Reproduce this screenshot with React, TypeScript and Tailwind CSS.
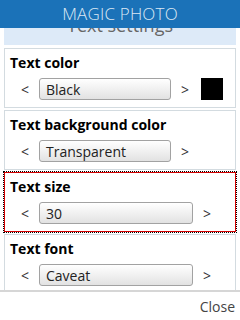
import React from 'react';

interface SettingRowProps {
  label: string;
  value: string;
  swatch?: string | null;
  focused?: boolean;
}

const SettingCard: React.FC<SettingRowProps> = ({ label, value, swatch, focused }) => {
  const hasSwatch = swatch !== undefined;
  return (
    <div
      className={
        'h-[60px] shrink-0 bg-white ' +
        (focused
          ? 'border border-[#d40000] outline-1 outline-dotted outline-black'
          : 'border border-[#d3dbe0]')
      }
    >
      <div className="pl-[5px] pt-[4px] text-[14px] leading-[20px] font-bold text-black">{label}</div>
      <div className={'mt-[5px] flex h-[22px] items-center pl-[6px] ' + (hasSwatch ? 'pr-[12px]' : 'pr-[14px]')}>
        <span className="w-[28px] text-center text-[14px] text-[#333]">&lt;</span>
        <div className="flex h-[22px] flex-1 items-center rounded-[3px] border border-[#a2a2a2] bg-linear-to-b from-white to-[#e2e2e2] pl-[6px] text-[14px] text-[#222]">
          {value}
        </div>
        <span className="w-[28px] text-center text-[14px] text-[#333]">&gt;</span>
        {hasSwatch && (
          <div className={'ml-[2px] h-[22px] w-[22px] ' + (swatch ? '' : 'bg-transparent')} style={swatch ? { backgroundColor: swatch } : undefined} />
        )}
      </div>
    </div>
  );
};

export default function App() {
  return (
    <div className="relative flex h-[320px] w-[240px] flex-col overflow-hidden bg-white" style={{ fontFamily: '"Open Sans", "DejaVu Sans", sans-serif' }}>
      {/* fixed header over the scrolled content */}
      <div className="absolute inset-x-0 top-0 z-10 flex h-[28px] items-center justify-center bg-[#1b72b8] text-[17px] font-light tracking-[0.2px] text-[#dbe8f4]">
        MAGIC PHOTO
      </div>

      <div className="flex flex-1 flex-col gap-[2px] overflow-hidden px-[4px] pt-[8px]">
        <div className="mb-[1px] h-[37px] shrink-0 bg-[#ddeaf8] pt-[5px] text-center text-[18px] leading-[24px] text-[#666]">
          Text settings
        </div>
        <SettingCard label="Text color" value="Black" swatch="#000000" />
        <SettingCard label="Text background color" value="Transparent" swatch={null} />
        <SettingCard label="Text size" value="30" focused />
        <SettingCard label="Text font" value="Caveat" />
      </div>

      <div className="flex h-[30px] shrink-0 items-center justify-end border-t-2 border-[#d6d6d6] pr-[5px] text-[14px] text-[#444]">
        Close
      </div>
    </div>
  );
}
